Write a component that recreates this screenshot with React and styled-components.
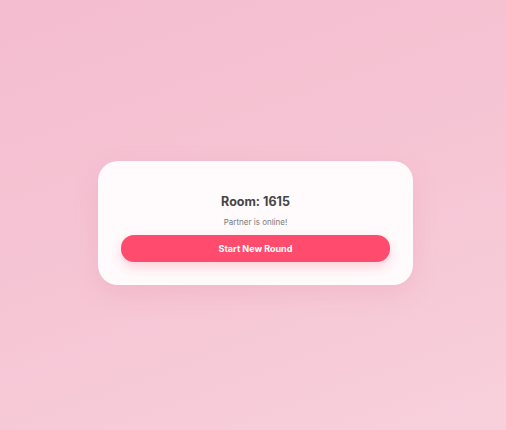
import React from 'react'
import styled, { createGlobalStyle } from 'styled-components'

const GlobalStyle = createGlobalStyle`
  html, body {
    margin: 0;
    padding: 0;
  }
  body {
    font-family: "Inter", "Noto Sans", sans-serif;
  }
`

export default function App() {
  return (
    <>
      <GlobalStyle />
      <Page>
        <Card>
          <RoomTitle>Room: 1615</RoomTitle>
          <StatusText>Partner is online!</StatusText>
          <StartButton>Start New Round</StartButton>
        </Card>
      </Page>
    </>
  )
}

const Page = styled.div`
  width: 100%;
  height: 430px;
  box-sizing: border-box;
  padding-top: 15px;
  display: flex;
  align-items: center;
  justify-content: center;
  background: linear-gradient(160deg, #f4bdd0 0%, #f6c6d5 55%, #f8d0dc 100%);
`

const Card = styled.div`
  width: 315px;
  box-sizing: border-box;
  margin-left: 5px;
  padding: 33px 23px 23px;
  border-radius: 20px;
  background: #fffbfc;
  box-shadow: 0 8px 24px rgba(220, 120, 150, 0.18);
  display: flex;
  flex-direction: column;
  align-items: center;
`

const RoomTitle = styled.h2`
  margin: 0;
  font-size: 12.5px;
  font-weight: 700;
  color: #454545;
  line-height: 16px;
`

const StatusText = styled.p`
  margin: 7px 0 0;
  font-size: 8px;
  color: #7a7a7a;
  line-height: 11px;
`

const StartButton = styled.button`
  margin-top: 7px;
  width: 100%;
  height: 27px;
  border: none;
  border-radius: 13px;
  background: #ff4b6e;
  color: #fff;
  font-family: inherit;
  font-size: 9px;
  font-weight: 700;
  box-shadow: 0 5px 12px rgba(255, 75, 110, 0.25);
  cursor: pointer;
`
